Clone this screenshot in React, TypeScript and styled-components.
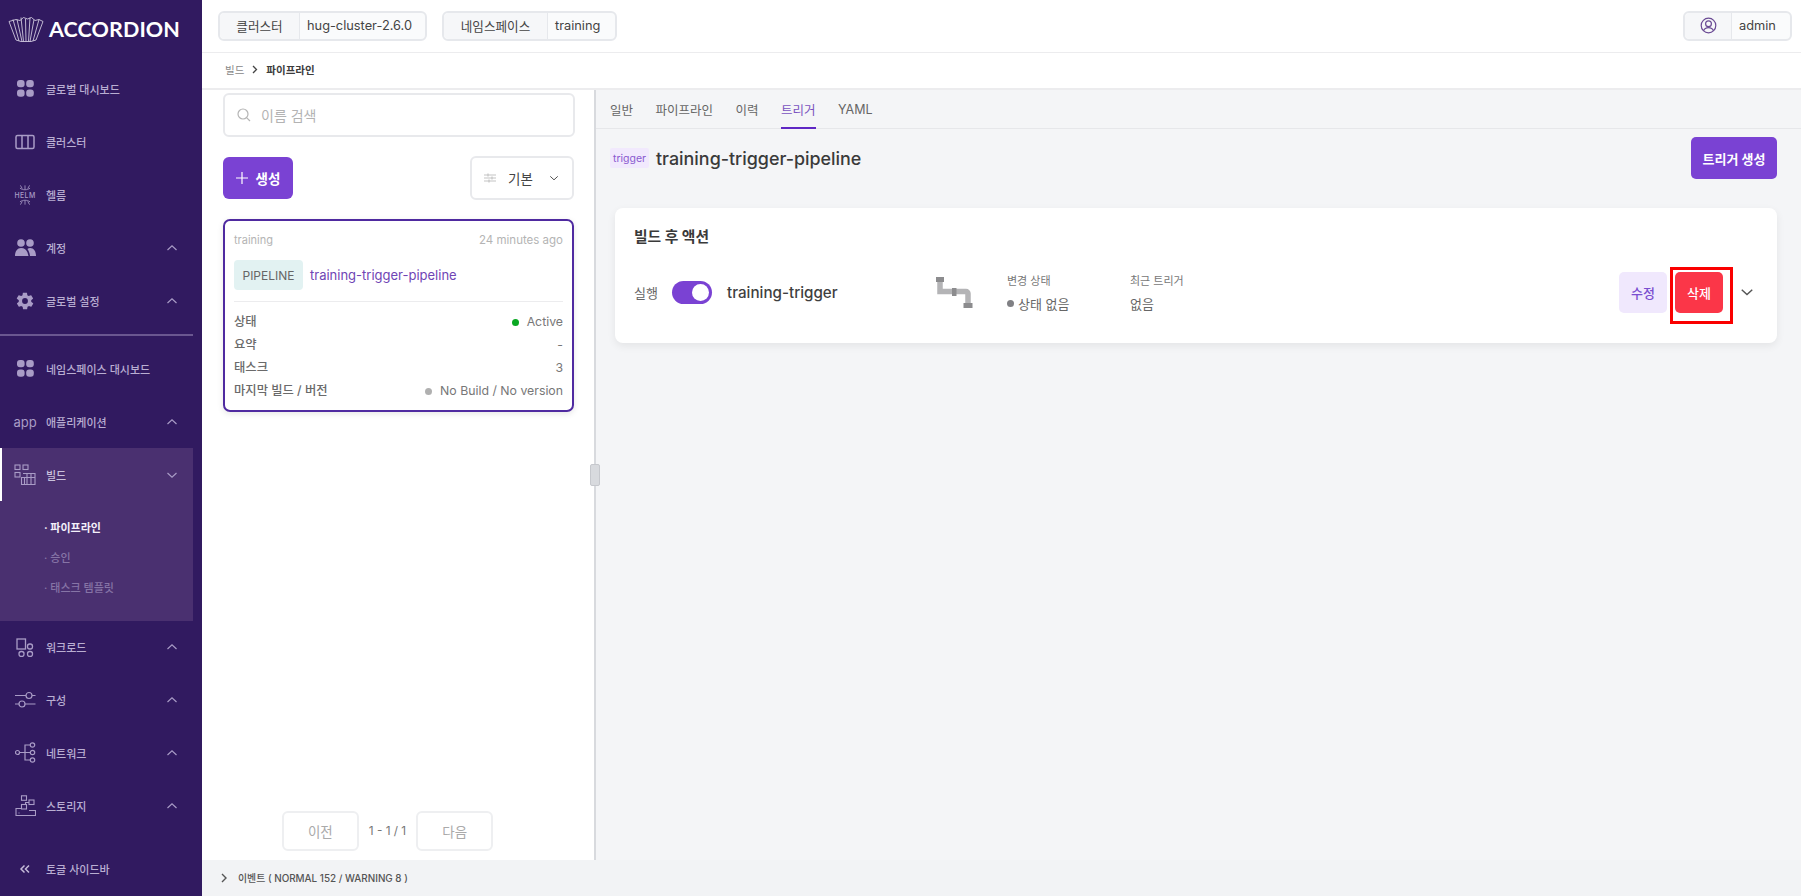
// App.tsx
import React from 'react';
import styled, { createGlobalStyle } from 'styled-components';

const FONT = `Inter, "Noto Sans CJK KR", "Noto Sans", sans-serif`;

const GlobalStyle = createGlobalStyle`
  html, body { margin: 0; padding: 0; height: 100%; overflow: hidden; }
  body { font-family: ${FONT}; background: #fff; color: #333; }
  *, *::before, *::after { box-sizing: border-box; }
`;

const Layout = styled.div`
  display: flex;
  width: 100%;
  height: 100vh;
`;

// Sidebar
const Sidebar = styled.aside`
  width: 202px;
  flex: none;
  background: #311a60;
  display: flex;
  flex-direction: column;
  padding-right: 9px;
`;

const LogoRow = styled.div`
  height: 62px;
  display: flex;
  align-items: center;
  gap: 5px;
  padding: 0 0 4px 8px;
`;

const LogoText = styled.span`
  font-family: Lato, "Open Sans", sans-serif;
  font-size: 21.5px;
  font-weight: 700;
  color: #fff;
  letter-spacing: 0.1px;
`;

const NavItem = styled.div<{ $active?: boolean }>`
  height: 53px;
  display: flex;
  align-items: center;
  padding-left: ${(p) => (p.$active ? '12px' : '14px')};
  padding-right: 15px;
  font-size: 11px;
  font-weight: 500;
  color: ${(p) => (p.$active ? '#c9c1dc' : '#b9aed2')};
  background: ${(p) => (p.$active ? '#4a3070' : 'transparent')};
  border-left: ${(p) => (p.$active ? '2px solid #fff' : '0')};
`;

const LowerNavItem = styled(NavItem)`
  height: 52.8px;
`;

const NavIcon = styled.span`
  width: 22px;
  height: 22px;
  margin-right: 10px;
  flex: none;
  display: flex;
  align-items: center;
  justify-content: center;
  color: #a99cc6;
  font-size: 13px;
  font-weight: 400;
`;

const NavLabel = styled.span`
  flex: 1;
`;

const Divider = styled.div`
  height: 2px;
  background: #6a5790;
  margin: 7px 0 6px 0;
`;

const SubMenu = styled.div`
  background: #4a3070;
  padding: 12px 0 18px 44px;
  display: flex;
  flex-direction: column;
`;

const SubItem = styled.div<{ $active?: boolean }>`
  height: 30px;
  line-height: 30px;
  font-size: 11px;
  font-weight: ${(p) => (p.$active ? 700 : 500)};
  color: ${(p) => (p.$active ? '#f4f0fa' : '#8674a6')};
`;

const ToggleRow = styled(NavItem)`
  margin-top: auto;
  height: 54px;
`;

// Top bar
const Main = styled.div`
  flex: 1;
  min-width: 0;
  display: flex;
  flex-direction: column;
`;

const TopBar = styled.header`
  height: 53px;
  flex: none;
  display: flex;
  align-items: center;
  gap: 15px;
  padding: 0 9px 1px 16px;
  border-bottom: 1px solid #ececee;
`;

const InfoGroup = styled.div`
  display: flex;
  height: 30px;
  border: 2px solid #e6e8ec;
  border-radius: 6px;
  background: #fafbfc;
  font-size: 12.8px;
  color: #444;
`;

const InfoKey = styled.div<{ $w: number }>`
  width: ${(p) => p.$w}px;
  display: flex;
  align-items: center;
  justify-content: center;
  background: #f6f7f9;
  border-right: 1px solid #e6e8ec;
  border-radius: 5px 0 0 5px;
  font-size: 12.6px;
`;

const InfoValue = styled.div<{ $w: number }>`
  width: ${(p) => p.$w}px;
  display: flex;
  align-items: center;
  padding-left: 7px;
  white-space: nowrap;
`;

const Spacer = styled.div`
  flex: 1;
`;

const Breadcrumb = styled.nav`
  height: 37px;
  flex: none;
  display: flex;
  align-items: center;
  gap: 7px;
  padding: 0 0 2px 23px;
  font-size: 10.5px;
  color: #888;
  border-bottom: 2px solid #ececee;
`;

const Crumb = styled.strong`
  font-weight: 700;
  color: #3c3c3c;
`;

const Content = styled.div`
  flex: 1;
  min-height: 0;
  display: flex;
`;

// Left list panel
const ListPanel = styled.section`
  width: 394px;
  flex: none;
  display: flex;
  flex-direction: column;
  padding: 3px 20px 9px 21px;
  border-right: 2px solid #d8dade;
  position: relative;
`;

const Handle = styled.div`
  position: absolute;
  top: 374px;
  right: -6px;
  width: 10px;
  height: 22px;
  background: #d8dade;
  border: 1px solid #c6c8cd;
  border-radius: 2px;
`;

const SearchBox = styled.div`
  height: 44px;
  margin-right: -1px;
  display: flex;
  align-items: center;
  gap: 10px;
  padding-left: 12px;
  border: 2px solid #e8e9ec;
  border-radius: 6px;
  font-size: 14px;
  color: #b3b3b3;
`;

const ActionRow = styled.div`
  display: flex;
  justify-content: space-between;
  align-items: center;
  margin-top: 19px;
`;

const CreateButton = styled.button`
  width: 70px;
  height: 42px;
  display: flex;
  align-items: center;
  justify-content: center;
  gap: 8px;
  border: 0;
  border-radius: 6px;
  background: #7a42d3;
  color: #fff;
  font-family: ${FONT};
  font-size: 13.5px;
  font-weight: 700;
`;

const SortSelect = styled.div`
  width: 104px;
  height: 44px;
  display: flex;
  align-items: center;
  gap: 12px;
  padding: 0 13px 0 12px;
  border: 2px solid #e8e9ec;
  border-radius: 6px;
  font-size: 13.5px;
  color: #444;

  & > svg:last-child {
    margin-left: auto;
  }
`;

const PipelineCard = styled.article`
  margin-top: 19px;
  height: 193px;
  border: 2px solid #4f2aa0;
  border-radius: 7px;
  padding: 12px 9px 0 9px;
  box-shadow: 0 2px 6px rgba(0, 0, 0, 0.1);
`;

const CardHead = styled.div`
  display: flex;
  justify-content: space-between;
  align-items: center;
  font-size: 11px;
  color: #b4b4b4;
`;

const Time = styled.span`
  font-size: 11.5px;
`;

const CardTitle = styled.div`
  display: flex;
  align-items: center;
  gap: 7px;
  margin-top: 13px;
  padding-bottom: 11px;
  border-bottom: 1px solid #ececee;
`;

const KindChip = styled.span`
  width: 69px;
  height: 30px;
  display: flex;
  align-items: center;
  justify-content: center;
  border-radius: 4px;
  background: #e2f2f2;
  font-size: 12px;
  color: #666;
`;

const PipelineName = styled.span`
  font-size: 13px;
  color: #6f45b5;
  margin-bottom: 1px;
`;

const MetaList = styled.div`
  padding-top: 8px;
`;

const MetaRow = styled.div`
  height: 22.9px;
  display: flex;
  justify-content: space-between;
  align-items: center;
  font-size: 12.3px;
  color: #777;
`;

const MetaKey = styled.span`
  font-weight: 500;
  color: #6a6a6a;
`;

const MetaValue = styled.span`
  display: flex;
  align-items: center;
  gap: 8px;
`;

const Dot = styled.i<{ $color: string }>`
  display: inline-block;
  width: 7px;
  height: 7px;
  border-radius: 50%;
  background: ${(p) => p.$color};
`;

const LowDot = styled(Dot)`
  margin-top: 3px;
`;

const Pagination = styled.div`
  margin-top: auto;
  display: flex;
  align-items: center;
  justify-content: center;
  gap: 10px;
  padding-right: 22px;
  font-size: 11.8px;
  color: #777;
`;

const PageButton = styled.button`
  width: 77px;
  height: 40px;
  background: #fff;
  border: 2px solid #eeeff1;
  border-radius: 6px;
  font-family: ${FONT};
  font-size: 13.5px;
  color: #aaa;
`;

// Right detail panel
const DetailPanel = styled.section`
  flex: 1;
  min-width: 0;
  background: #f4f5f7;
  display: flex;
  flex-direction: column;
`;

const Tabs = styled.div`
  height: 39px;
  flex: none;
  display: flex;
  gap: 22.5px;
  padding-left: 14px;
  border-bottom: 1px solid #e6e7ea;
`;

const Tab = styled.div<{ $active?: boolean }>`
  height: 39px;
  display: flex;
  align-items: center;
  font-size: 12.5px;
  color: ${(p) => (p.$active ? '#7a52c0' : '#666')};
  border-bottom: ${(p) => (p.$active ? '2px solid #5f27c4' : '0')};
  padding-top: ${(p) => (p.$active ? '2px' : '0')};
`;

const TitleRow = styled.div`
  display: flex;
  align-items: center;
  justify-content: space-between;
  padding: 8px 24px 0 14px;
`;

const TitleLeft = styled.div`
  display: flex;
  align-items: center;
  gap: 7px;
`;

const TriggerBadge = styled.span`
  width: 39px;
  height: 20px;
  display: flex;
  align-items: center;
  justify-content: center;
  border-radius: 2px;
  background: #f1e9fd;
  font-size: 10.5px;
  color: #8a5ad0;
`;

const PageTitle = styled.h1`
  margin: 0;
  font-size: 17.9px;
  font-weight: 500;
  color: #3a3a3a;
`;

const PrimaryButton = styled.button`
  width: 86px;
  height: 42px;
  border: 0;
  border-radius: 5px;
  background: #7a42d3;
  color: #fff;
  font-family: ${FONT};
  font-size: 13px;
  font-weight: 700;
`;

const ActionCard = styled.div`
  margin: 29px 24px 0 19px;
  height: 135px;
  background: #fff;
  border-radius: 8px;
  box-shadow: 0 3px 8px rgba(0, 0, 0, 0.07);
  padding: 19px 19px 0 19px;
`;

const CardHeading = styled.h2`
  margin: 0;
  font-size: 14.8px;
  font-weight: 700;
  color: #3a3a3a;
  line-height: 20px;
`;

const TriggerRow = styled.div`
  display: flex;
  align-items: center;
  margin-top: 21px;
  height: 48px;
`;

const RunLabel = styled.span`
  font-size: 13px;
  color: #666;
  width: 38px;
`;

const Switch = styled.span`
  width: 40px;
  height: 23px;
  border-radius: 12px;
  background: #7a42d3;
  display: flex;
  align-items: center;
  justify-content: flex-end;
  padding-right: 3px;
  margin-right: 15px;

  &::after {
    content: '';
    width: 17px;
    height: 17px;
    border-radius: 50%;
    background: #fff;
  }
`;

const TriggerName = styled.span`
  width: 208px;
  font-size: 15.2px;
  font-weight: 500;
  color: #3f3f3f;
`;

const PipeBox = styled.span`
  width: 72px;
  display: flex;
  padding-top: 2px;
`;

const Stat = styled.div<{ $w: number }>`
  width: ${(p) => p.$w}px;
  display: flex;
  flex-direction: column;
  gap: 6px;
`;

const StatLabel = styled.span`
  font-size: 11px;
  color: #777;
`;

const StatValue = styled.span`
  display: flex;
  align-items: center;
  gap: 4px;
  font-size: 13px;
  color: #666;
`;

const RowActions = styled.div`
  margin-left: auto;
  display: flex;
  align-items: center;
  gap: 8px;
`;

const EditButton = styled.button`
  width: 48px;
  height: 41px;
  border: 0;
  border-radius: 5px;
  background: #f0e8fd;
  color: #7a4ed0;
  font-family: ${FONT};
  font-size: 13px;
  font-weight: 500;
`;

const DeleteButton = styled.button`
  width: 48px;
  height: 41px;
  border: 0;
  border-radius: 5px;
  background: #fb3648;
  color: #fff;
  font-family: ${FONT};
  font-size: 13px;
  font-weight: 500;
`;

// the red box is drawn over the delete button in the screenshot
const Highlighted = styled.span`
  position: relative;
  display: flex;

  &::after {
    content: '';
    position: absolute;
    left: -5px;
    top: -5px;
    width: 63px;
    height: 57px;
    border: 3px solid #fa0000;
    pointer-events: none;
  }
`;

const ChevronSlot = styled.span`
  display: flex;
  margin-left: 9px;
  margin-right: 4px;
  color: #555;
`;

const EventBar = styled.footer`
  height: 36px;
  flex: none;
  display: flex;
  align-items: center;
  gap: 10px;
  padding: 0 0 1px 18px;
  background: #f2f3f5;
  font-size: 9.9px;
  font-weight: 500;
  color: #555;
`;

// Icons
const GridIcon = () => (
  <svg width="17" height="17" viewBox="0 0 17 17" fill="#a99cc6">
    <rect x="0" y="0" width="7.6" height="7.2" rx="3" />
    <rect x="9.2" y="0" width="7.6" height="7.2" rx="3" />
    <rect x="0" y="9.6" width="7.6" height="7.2" rx="3" />
    <rect x="9.2" y="9.6" width="7.6" height="7.2" rx="3" />
  </svg>
);

const ColumnsIcon = () => (
  <svg width="20" height="16" viewBox="0 0 20 16" fill="none" stroke="#a99cc6" strokeWidth="1.5">
    <rect x="1" y="1.5" width="18" height="13" rx="1.5" />
    <path d="M7 1.5v13M13 1.5v13" />
  </svg>
);

const HelmIcon = () => (
  <svg width="24" height="24" viewBox="0 0 24 24" fill="none" stroke="#a99cc6" strokeWidth="0.9">
    <path d="M6.500 4.500c3.300 2.400 7.700 2.400 11 0M12 1.500v4.500M7 1.500l2 3.500M17 1.500l-2 3.500M6.500 19.500c3.300-2.400 7.700-2.400 11 0M12 18v4.500M7 22.500l2-3.500M17 22.500l-2-3.500" />
    <text x="12" y="15" textAnchor="middle" fontSize="7.500" fontWeight="500" letterSpacing="0.5" fill="#a99cc6" stroke="none" fontFamily="Inter, sans-serif">HELM</text>
  </svg>
);

const PeopleIcon = () => (
  <svg width="21" height="17" viewBox="0 0 21 17" fill="#a99cc6">
    <circle cx="6" cy="4" r="3.800" />
    <circle cx="15" cy="4" r="3.800" />
    <path d="M0 17c0-5 2.500-8 6-8s5.500 2 6.500 4.500l1 3.500zM15 17c-.3-3-1.400-5.500-2.600-7 .8-.6 1.600-1 2.800-1 3.500 0 5.800 3 5.800 8z" />
  </svg>
);

const GearIcon = () => (
  <svg width="20" height="20" viewBox="0 0 24 24" fill="#a99cc6">
    <path d="M19.400 13c.1-.3.1-.7.1-1s0-.7-.1-1l2.100-1.600c.2-.2.200-.4.100-.6l-2-3.500c-.1-.2-.4-.3-.6-.2l-2.500 1c-.5-.4-1.100-.7-1.700-1l-.4-2.600c0-.3-.2-.5-.5-.5h-4c-.3 0-.5.200-.5.500l-.4 2.600c-.6.300-1.200.6-1.700 1l-2.500-1c-.2-.1-.5 0-.6.200l-2 3.500c-.1.200-.1.500.1.600L4.600 11c0 .3-.1.700-.1 1s0 .7.1 1l-2.100 1.600c-.2.200-.2.400-.1.600l2 3.500c.1.200.4.300.6.200l2.500-1c.5.400 1.100.7 1.700 1l.4 2.600c0 .3.200.5.500.5h4c.3 0 .5-.2.500-.5l.4-2.600c.6-.3 1.200-.6 1.700-1l2.500 1c.2.100.5 0 .6-.2l2-3.500c.1-.2.1-.5-.1-.6zM12 15.500a3.500 3.500 0 1 1 0-7 3.500 3.500 0 0 1 0 7z" />
  </svg>
);

const BuildIcon = () => (
  <svg width="22" height="22" viewBox="0 0 22 22" fill="none" stroke="#a99cc6" strokeWidth="1.100">
    <rect x="1" y="1" width="5" height="4.500" />
    <rect x="9" y="1" width="5" height="4.500" />
    <rect x="1" y="8.500" width="5" height="4.500" />
    <path d="M9 9.500h12v11H7.500v-7H21M13 9.500v11M17 9.500v11M10.500 13.500v7" />
  </svg>
);

const WorkloadIcon = () => (
  <svg width="18" height="19" viewBox="0 0 18 19" fill="none" stroke="#a99cc6" strokeWidth="1.300">
    <rect x="1" y="1" width="8.500" height="10" />
    <rect x="11.500" y="6" width="5" height="5" rx="2.200" />
    <rect x="3" y="13.500" width="5" height="5" rx="2.200" />
    <rect x="11.500" y="13.500" width="5" height="5" rx="2.200" />
  </svg>
);

const ConfigIcon = () => (
  <svg width="21" height="18" viewBox="0 0 21 18" fill="none" stroke="#a99cc6" strokeWidth="1.200">
    <path d="M0 4.500h11M17 4.500h3.500M0 13h4M10 13h10.500" />
    <circle cx="14" cy="4.500" r="3" />
    <circle cx="7" cy="13" r="3" />
  </svg>
);

const NetworkIcon = () => (
  <svg width="21" height="21" viewBox="0 0 21 21" fill="none" stroke="#a99cc6" strokeWidth="1.200">
    <circle cx="2.500" cy="10.500" r="2" />
    <circle cx="17.500" cy="3" r="2.200" />
    <circle cx="17.500" cy="10.500" r="2.200" />
    <circle cx="17.500" cy="18" r="2.200" />
    <path d="M4.500 10.500h10.800M15.300 3H10v15h5.300" />
  </svg>
);

const StorageIcon = () => (
  <svg width="21" height="21" viewBox="0 0 21 21" fill="none" stroke="#a99cc6" strokeWidth="1.100">
    <rect x="6.500" y="0.800" width="5" height="4.500" />
    <rect x="14" y="5" width="5" height="4.500" />
    <rect x="6.500" y="9.500" width="5" height="4.500" />
    <path d="M14 7.500h-3.500v2M1 15.500v-2h5.500M1 15.500v5h19.500v-5h-6.500M3.500 18h1" />
  </svg>
);

const Chevron = ({ up, size = 12, color = '#a99cc6' }: { up?: boolean; size?: number; color?: string }) => (
  <svg width={size} height={size} viewBox="0 0 12 12" fill="none" stroke={color} strokeWidth="1.200">
    <path d={up ? 'M1.500 8L6 3.800 10.500 8' : 'M1.500 4L6 8.200 10.500 4'} />
  </svg>
);

const AccordionLogo = () => (
  <svg width="36" height="28" viewBox="0 0 36 28" fill="none" stroke="#cfc8de" strokeWidth="0.900">
    <path d="M1 6.500L8 25l5 1.500h10l5-1.500 7-18.500-4-2-4 1-3.500-3-4 1.500-4-1.500-3.500 3-4-1z" />
    <path d="M5 4.500L11 26M9 4.500l5 22M13 2.500l2.500 24M17.500 4l.500 22.500M22 2.500L20.500 26.500M26 4.500l-4 22M31 4.500L25 26" />
  </svg>
);

const PipeIcon = () => (
  <svg width="38" height="32" viewBox="0 0 38 32" fill="none">
    <path d="M5 4v10.500h26a2 2 0 0 1 2 2V27" stroke="#b4b4b6" strokeWidth="5.500" />
    <rect x="1" y="0" width="8" height="5" fill="#8c8c8e" />
    <rect x="17" y="11" width="4.500" height="8" fill="#8c8c8e" />
    <rect x="28.500" y="26" width="9" height="5" fill="#8c8c8e" />
  </svg>
);

const navTop = [
  { label: '글로벌 대시보드', icon: <GridIcon /> },
  { label: '클러스터', icon: <ColumnsIcon /> },
  { label: '헬름', icon: <HelmIcon /> },
  { label: '계정', icon: <PeopleIcon />, chevron: true },
  { label: '글로벌 설정', icon: <GearIcon />, chevron: true },
];

const navBottom = [
  { label: '워크로드', icon: <WorkloadIcon /> },
  { label: '구성', icon: <ConfigIcon /> },
  { label: '네트워크', icon: <NetworkIcon /> },
  { label: '스토리지', icon: <StorageIcon /> },
];

const tabs = ['일반', '파이프라인', '이력', '트리거', 'YAML'];

const App: React.FC = () => {
  return (
    <Layout>
      <GlobalStyle />
      <Sidebar>
        <LogoRow>
          <AccordionLogo />
          <LogoText>ACCORDION</LogoText>
        </LogoRow>
        {navTop.map((item) => (
          <NavItem key={item.label}>
            <NavIcon>{item.icon}</NavIcon>
            <NavLabel>{item.label}</NavLabel>
            {item.chevron && <Chevron up />}
          </NavItem>
        ))}
        <Divider />
        <NavItem>
          <NavIcon><GridIcon /></NavIcon>
          <NavLabel>네임스페이스 대시보드</NavLabel>
        </NavItem>
        <NavItem>
          <NavIcon>app</NavIcon>
          <NavLabel>애플리케이션</NavLabel>
          <Chevron up />
        </NavItem>
        <NavItem $active>
          <NavIcon><BuildIcon /></NavIcon>
          <NavLabel>빌드</NavLabel>
          <Chevron />
        </NavItem>
        <SubMenu>
          <SubItem $active>· 파이프라인</SubItem>
          <SubItem>· 승인</SubItem>
          <SubItem>· 태스크 템플릿</SubItem>
        </SubMenu>
        {navBottom.map((item) => (
          <LowerNavItem key={item.label}>
            <NavIcon>{item.icon}</NavIcon>
            <NavLabel>{item.label}</NavLabel>
            <Chevron up />
          </LowerNavItem>
        ))}
        <ToggleRow>
          <NavIcon>
            <svg width="12" height="12" viewBox="0 0 12 12" fill="none" stroke="#c4bad8" strokeWidth="1.500">
              <path d="M5.500 2.500L2 6l3.500 3.500M10 2.500L6.500 6l3.500 3.500" />
            </svg>
          </NavIcon>
          <NavLabel>토글 사이드바</NavLabel>
        </ToggleRow>
      </Sidebar>

      <Main>
        <TopBar>
          <InfoGroup>
            <InfoKey $w={80}>클러스터</InfoKey>
            <InfoValue $w={125}>hug-cluster-2.6.0</InfoValue>
          </InfoGroup>
          <InfoGroup>
            <InfoKey $w={104}>네임스페이스</InfoKey>
            <InfoValue $w={67}>training</InfoValue>
          </InfoGroup>
          <Spacer />
          <InfoGroup>
            <InfoKey $w={47}>
              <svg width="17" height="17" viewBox="0 0 17 17" fill="none" stroke="#6a4a94" strokeWidth="1.200">
                <circle cx="8.500" cy="8.500" r="7.300" />
                <circle cx="8.500" cy="6.800" r="2.900" />
                <path d="M3.500 13.800c.8-2 2.800-3.200 5-3.200s4.200 1.200 5 3.200" />
              </svg>
            </InfoKey>
            <InfoValue $w={58}>admin</InfoValue>
          </InfoGroup>
        </TopBar>

        <Breadcrumb>
          빌드
          <svg width="8" height="9" viewBox="0 0 8 9" fill="none" stroke="#444" strokeWidth="1.300">
            <path d="M2 1l3.500 3.500L2 8" />
          </svg>
          <Crumb>파이프라인</Crumb>
        </Breadcrumb>

        <Content>
          <ListPanel>
            <SearchBox>
              <svg width="14" height="14" viewBox="0 0 14 14" fill="none" stroke="#b5b5b5" strokeWidth="1.200">
                <circle cx="6" cy="6" r="5" />
                <path d="M9.800 9.800L13 13" />
              </svg>
              이름 검색
            </SearchBox>
            <ActionRow>
              <CreateButton>
                <svg width="12" height="12" viewBox="0 0 12 12" stroke="#fff" strokeWidth="1.200">
                  <path d="M6 0v12M0 6h12" />
                </svg>
                생성
              </CreateButton>
              <SortSelect>
                <svg width="12" height="10" viewBox="0 0 12 10" fill="none" stroke="#c4c4c4" strokeWidth="1.200">
                  <path d="M0 2h12M0 5h12M0 8h12M4 .5v3M8 3.500v3M5 6.500v3" />
                </svg>
                기본
                <Chevron size={10} color="#555" />
              </SortSelect>
            </ActionRow>
            <PipelineCard>
              <CardHead>
                training
                <Time>24 minutes ago</Time>
              </CardHead>
              <CardTitle>
                <KindChip>PIPELINE</KindChip>
                <PipelineName>training-trigger-pipeline</PipelineName>
              </CardTitle>
              <MetaList>
                <MetaRow>
                  <MetaKey>상태</MetaKey>
                  <MetaValue><LowDot $color="#0aa822" />Active</MetaValue>
                </MetaRow>
                <MetaRow>
                  <MetaKey>요약</MetaKey>
                  <MetaValue>-</MetaValue>
                </MetaRow>
                <MetaRow>
                  <MetaKey>태스크</MetaKey>
                  <MetaValue>3</MetaValue>
                </MetaRow>
                <MetaRow>
                  <MetaKey>마지막 빌드 / 버전</MetaKey>
                  <MetaValue><LowDot $color="#b0b0b0" />No Build / No version</MetaValue>
                </MetaRow>
              </MetaList>
            </PipelineCard>
            <Pagination>
              <PageButton>이전</PageButton>
              1 - 1 / 1
              <PageButton>다음</PageButton>
            </Pagination>
            <Handle />
          </ListPanel>

          <DetailPanel>
            <Tabs>
              {tabs.map((t) => (
                <Tab key={t} $active={t === '트리거'}>{t}</Tab>
              ))}
            </Tabs>
            <TitleRow>
              <TitleLeft>
                <TriggerBadge>trigger</TriggerBadge>
                <PageTitle>training-trigger-pipeline</PageTitle>
              </TitleLeft>
              <PrimaryButton>트리거 생성</PrimaryButton>
            </TitleRow>
            <ActionCard>
              <CardHeading>빌드 후 액션</CardHeading>
              <TriggerRow>
                <RunLabel>실행</RunLabel>
                <Switch />
                <TriggerName>training-trigger</TriggerName>
                <PipeBox><PipeIcon /></PipeBox>
                <Stat $w={123}>
                  <StatLabel>변경 상태</StatLabel>
                  <StatValue><Dot $color="#808084" />상태 없음</StatValue>
                </Stat>
                <Stat $w={100}>
                  <StatLabel>최근 트리거</StatLabel>
                  <StatValue>없음</StatValue>
                </Stat>
                <RowActions>
                  <EditButton>수정</EditButton>
                  <Highlighted>
                    <DeleteButton>삭제</DeleteButton>
                  </Highlighted>
                  <ChevronSlot><Chevron size={14} color="#555" /></ChevronSlot>
                </RowActions>
              </TriggerRow>
            </ActionCard>
          </DetailPanel>
        </Content>

        <EventBar>
          <svg width="8" height="10" viewBox="0 0 8 10" fill="none" stroke="#555" strokeWidth="1.400">
            <path d="M2 1l4 4-4 4" />
          </svg>
          이벤트 ( NORMAL 152 / WARNING 8 )
        </EventBar>
      </Main>
    </Layout>
  );
};

export default App;
